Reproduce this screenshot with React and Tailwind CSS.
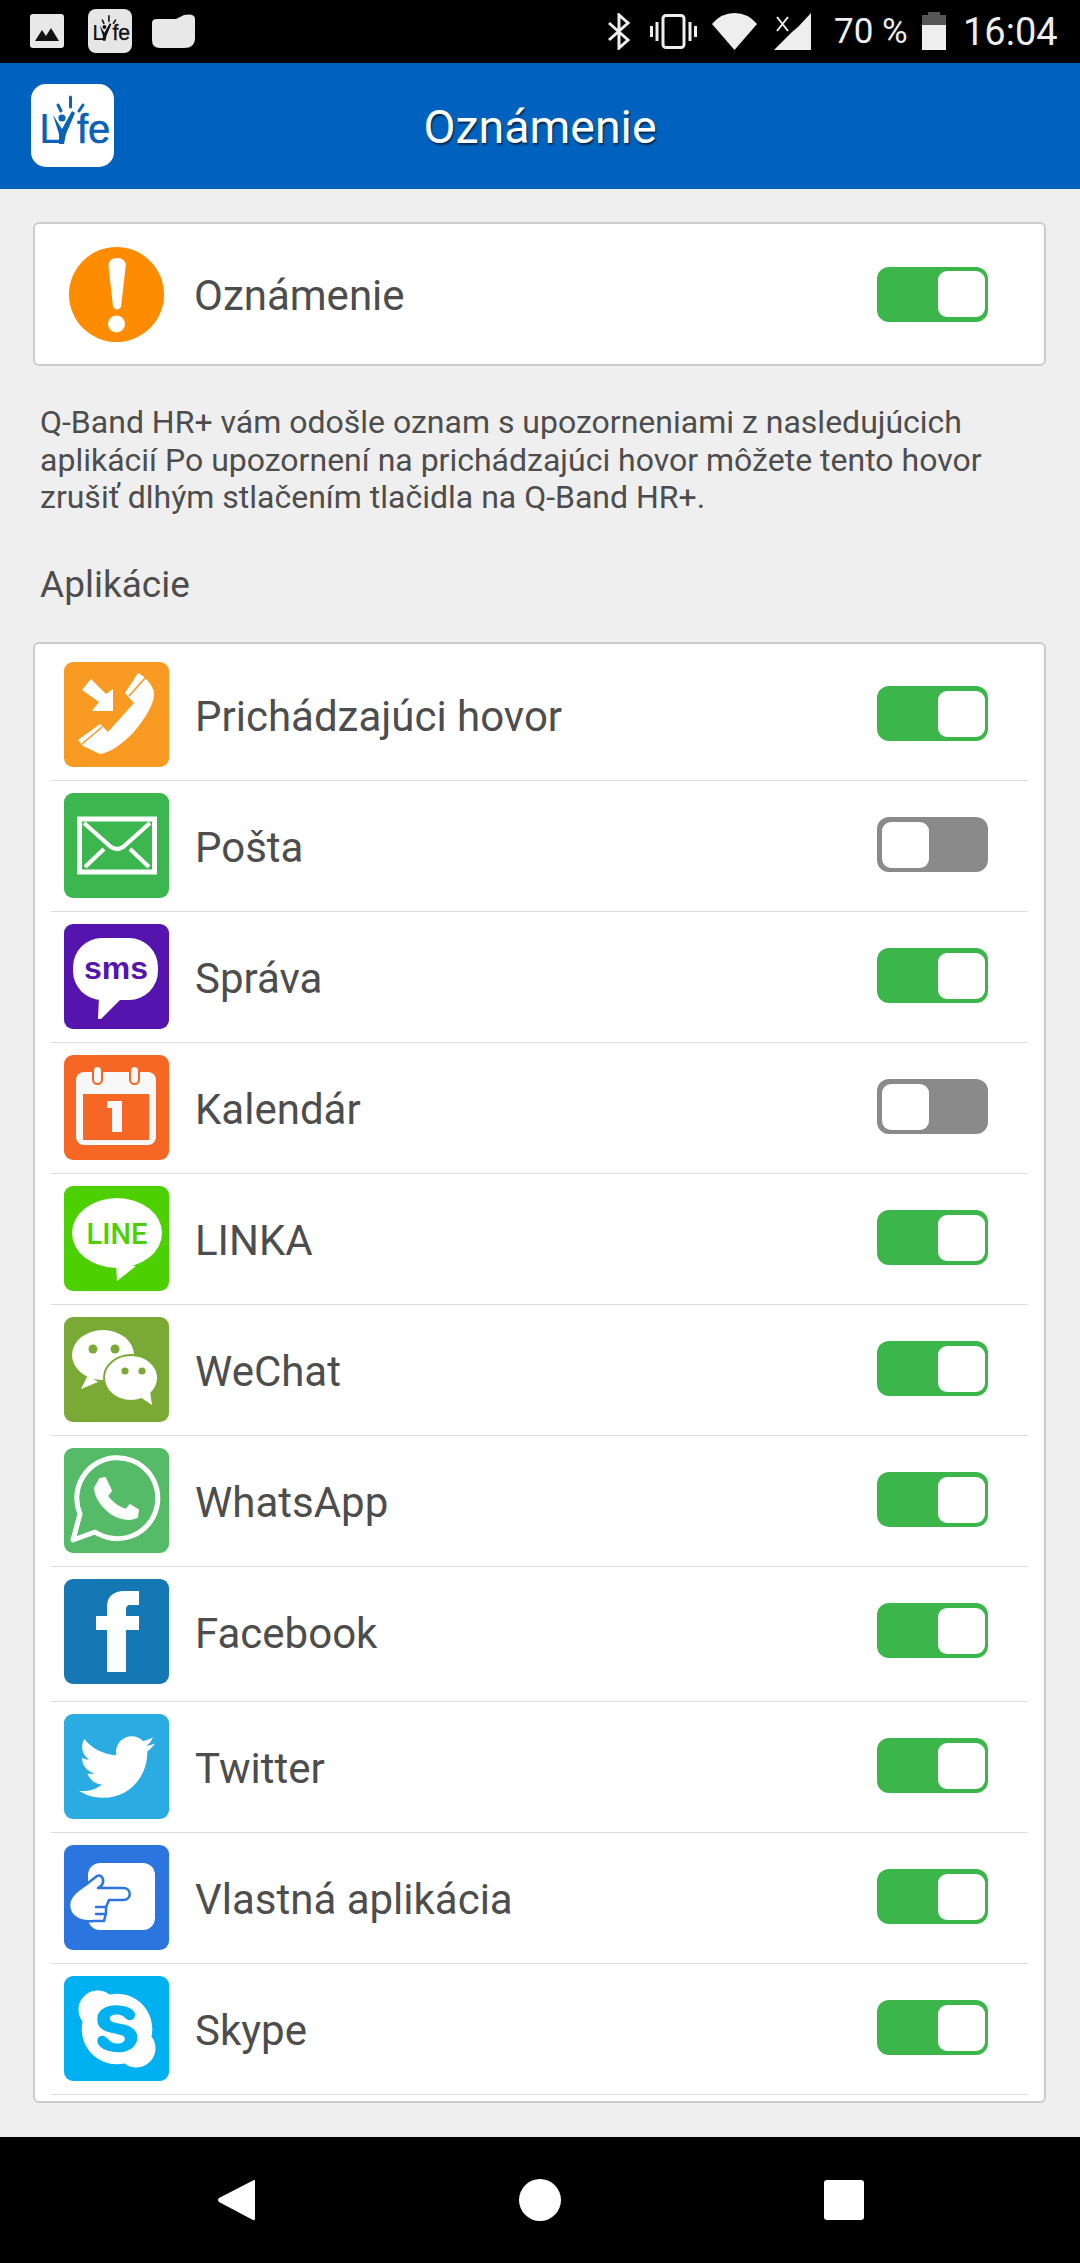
import { FaSkype, FaTwitter } from "react-icons/fa";

function LifeLogo({ color, box }) {
  return (
    <svg viewBox="0 0 83 83" className="h-full w-full">
      <rect width="83" height="83" rx="15" fill={box} />
      <text x="8" y="59" fontFamily="Liberation Sans, sans-serif" fontSize="43" fill={color}>L</text>
      <text x="46" y="59" fontFamily="Liberation Sans, sans-serif" fontSize="40" fill={color} stroke={color} strokeWidth="0.6">fe</text>
      <circle cx="31" cy="34" r="3.6" fill={color} />
      <path d="M22 31 L31 45 L41 27 L44 29 L35 50 L33 60 H28 L28 50 Z" fill={color} />
      <path d="M39.5 13 V23 M27 21 L30 27 M52 21 L48 27" stroke={color} strokeWidth="3" strokeLinecap="round" />
    </svg>
  );
}

function StatusIcons() {
  return (
    <div className="flex h-[63px] items-start bg-black">
      <svg viewBox="0 0 34 34" className="ml-[30px] mt-[14px] h-[34px] w-[34px]">
        <rect width="34" height="34" rx="3" fill="#e8e8e8" />
        <path d="M5 27 L12 16 L16 22 L21 14 L29 27 Z" fill="#111" />
      </svg>
      <div className="ml-[24px] mt-[9px] h-[44px] w-[44px]">
        <LifeLogo color="#111" box="#e6e6e6" />
      </div>
      <svg viewBox="0 0 43 34" className="ml-[20px] mt-[14px] h-[34px] w-[43px]">
        <path d="M0 9 Q0 5 5 5 H24 L32 1 Q43 -1 43 5 V24 Q43 34 32 34 H8 Q0 34 0 26 Z" fill="#e8e8e8" />
      </svg>
      <svg viewBox="0 0 24 37" className="ml-[412px] mt-[13px] h-[37px] w-[24px]" fill="none" stroke="#eee" strokeWidth="3">
        <path d="M2 10 L21 27 L12 35 V2 L21 10 L2 27" />
      </svg>
      <svg viewBox="0 0 47 35" className="ml-[19px] mt-[14px] h-[35px] w-[47px]" fill="none" stroke="#eee" strokeWidth="3">
        <rect x="13" y="1.5" width="21" height="32" rx="3" />
        <path d="M7 8 V27 M40 8 V27 M1.5 12 V23 M45.5 12 V23" />
      </svg>
      <svg viewBox="0 0 47 37" className="ml-[14px] mt-[13px] h-[37px] w-[47px]">
        <path d="M23.5 37 L1 11 Q10 0 23.5 0 Q37 0 46 11 Z" fill="#eee" />
      </svg>
      <svg viewBox="0 0 37 37" className="ml-[16px] mt-[13px] h-[37px] w-[37px]">
        <path d="M37 0 V37 H0 L18 19 L24 14 Z" fill="#eee" />
        <path d="M3 4 L14 18 M14 4 L3 18" stroke="#eee" strokeWidth="2" />
      </svg>
      <span className="ml-[23px] mt-[12px] w-[76px] whitespace-nowrap text-[35px] leading-[40px] text-[#eeeeee]">70 %</span>
      <div className="ml-[12px] mt-[12px] flex h-[38px] w-[24px] flex-col items-center">
        <div className="h-[3px] w-[12px] bg-[#555555]" />
        <div className="h-[10px] w-[24px] bg-[#555555]" />
        <div className="h-[25px] w-[24px] bg-[#eeeeee]" />
      </div>
      <span className="ml-[17px] mt-[11px] whitespace-nowrap text-[38px] leading-[42px] text-[#eeeeee]">16:04</span>
    </div>
  );
}

function Header() {
  return (
    <header className="relative flex h-[126px] items-start bg-[#0062be]">
      <div className="ml-[31px] mt-[21px] h-[83px] w-[83px]">
        <LifeLogo color="#0a62b8" box="#ffffff" />
      </div>
      <h1 className="absolute left-0 right-0 top-[37px] text-center text-[46.5px] leading-[54px] text-white [text-shadow:1px_2px_2px_rgba(0,0,0,0.6)]">Oznámenie</h1>
    </header>
  );
}

function Toggle({ on }) {
  return (
    <div className={`flex h-[55px] w-[111px] items-center rounded-[12px] ${on ? "justify-end bg-[#3cb54a] pr-[3px]" : "justify-start bg-[#8a8a8a] pl-[5px]"}`}>
      <div className="h-[46px] w-[47px] rounded-[9px] bg-white" />
    </div>
  );
}

function IconBox({ bg, children }) {
  return (
    <div className={`flex h-[105px] w-[105px] shrink-0 items-center justify-center overflow-hidden rounded-[9px] ${bg}`}>
      {children}
    </div>
  );
}

function Drawing({ children }) {
  return <svg viewBox="0 0 105 105" className="h-[105px] w-[105px]">{children}</svg>;
}

const icons = {
  call: (
    <IconBox bg="bg-[#f99a22]">
      <Drawing>
        <path d="M74 11 L79 14 Q90 24 90 32 Q90 46 69 71 Q50 90 36 92 L19 84 L14 78 L36 62 L44 70 L70 41 L61 31 Z" fill="#fff" />
        <path d="M65 34 L82 15 M18 82 L38 65" stroke="#f99a22" strokeWidth="1.6" />
        <path d="M49 49 H28 L35 40 L18 28 L27 17 L42 32 L49 27 Z" fill="#fff" />
      </Drawing>
    </IconBox>
  ),
  mail: (
    <IconBox bg="bg-[#3cb64e]">
      <Drawing>
        <rect x="15.5" y="26" width="75" height="53" fill="none" stroke="#fff" strokeWidth="5" />
        <path d="M20 30 L47 54 Q53 58 59 54 L86 30 M21 74 L40 56 M85 74 L66 56" fill="none" stroke="#fff" strokeWidth="4.2" />
      </Drawing>
    </IconBox>
  ),
  sms: (
    <IconBox bg="bg-[#5514ae]">
      <Drawing>
        <rect x="9" y="14" width="85" height="62" rx="29" fill="#fff" />
        <path d="M35 72 L34 95 L37 95 L58 74 Z" fill="#fff" />
        <text x="52" y="55" textAnchor="middle" fontFamily="Liberation Sans, sans-serif" fontWeight="700" fontSize="32" fill="#5514ae">sms</text>
      </Drawing>
    </IconBox>
  ),
  calendar: (
    <IconBox bg="bg-[#f66725]">
      <Drawing>
        <rect x="12" y="17" width="80" height="73" rx="8" fill="#f8f8f8" />
        <rect x="19" y="39" width="66" height="46" fill="#f66725" />
        <rect x="29" y="11" width="9" height="18" rx="4.5" fill="#f8f8f8" stroke="#f66725" strokeWidth="2" />
        <rect x="66" y="11" width="9" height="18" rx="4.5" fill="#f8f8f8" stroke="#f66725" strokeWidth="2" />
        <path d="M43 46 H58 V77 H48 V53 H43 Z" fill="#f8f8f8" />
      </Drawing>
    </IconBox>
  ),
  line: (
    <IconBox bg="bg-[#4cd000]">
      <Drawing>
        <ellipse cx="53" cy="47" rx="45" ry="35" fill="#fff" />
        <path d="M52 78 L53 95 L72 80 Z" fill="#fff" />
        <text x="53" y="58" textAnchor="middle" fontFamily="Roboto, sans-serif" fontWeight="500" fontSize="29" fill="#4cd000">LINE</text>
      </Drawing>
    </IconBox>
  ),
  wechat: (
    <IconBox bg="bg-[#7aaa35]">
      <Drawing>
        <ellipse cx="39" cy="38" rx="31" ry="25" fill="#fff" />
        <path d="M24 58 L17 72 L34 65 Z" fill="#fff" />
        <circle cx="29" cy="32" r="4.5" fill="#7aaa35" />
        <circle cx="51" cy="32" r="4.5" fill="#7aaa35" />
        <ellipse cx="67" cy="61" rx="27" ry="23" fill="#fff" stroke="#7aaa35" strokeWidth="2" />
        <path d="M76 80 L88 88 L86 74 Z" fill="#fff" />
        <circle cx="61" cy="54" r="3.6" fill="#7aaa35" />
        <circle cx="78" cy="54" r="3.6" fill="#7aaa35" />
      </Drawing>
    </IconBox>
  ),
  whatsapp: (
    <IconBox bg="bg-[#56bb68]">
      <Drawing>
        <path d="M9 92 L16 66 A40.5 40.5 0 1 1 31 84 Z" fill="none" stroke="#fff" strokeWidth="5" strokeLinejoin="round" />
        <path d="M36 31 L41 30 L47 43 L43 48 Q50 58 62 62 L66 57 L74 62 L73 69 Q62 74 48 66 Q32 54 31 40 Z" fill="#fff" strokeLinejoin="round" stroke="#fff" strokeWidth="2" />
      </Drawing>
    </IconBox>
  ),
  facebook: (
    <IconBox bg="bg-[#1577b4]">
      <Drawing>
        <path d="M43 93 V51 H32 V37 H43 V28 C43 17 50 12 60 12 H75 V26 H66 C63 26 62 28 62 31 V37 H75 V51 H62 V93 Z" fill="#fff" />
      </Drawing>
    </IconBox>
  ),
  twitter: (
    <IconBox bg="bg-[#2aabe2]">
      <FaTwitter size={76} color="#ffffff" />
    </IconBox>
  ),
  custom: (
    <IconBox bg="bg-[#2c74de]">
      <Drawing>
        <rect x="24" y="18" width="67" height="67" rx="12" fill="#fff" />
        <path d="M5 60 C5 50 16 44 24 38 L33 31 C38 29 41 35 38 40 L34 43 H59 C68 43 68 55 59 55 H45 L42 62 V68 L40 76 L30 76 C14 78 5 70 5 60 Z" fill="#fff" stroke="#2c74de" strokeWidth="2.5" strokeLinejoin="round" />
        <path d="M32 62 H42 M32 69 H41" stroke="#2c74de" strokeWidth="2.5" strokeLinecap="round" />
      </Drawing>
    </IconBox>
  ),
  skype: (
    <IconBox bg="bg-[#00b1f2]">
      <FaSkype size={88} color="#ffffff" />
    </IconBox>
  ),
};

const apps = [
  { name: "Prichádzajúci hovor", icon: "call", on: true },
  { name: "Pošta", icon: "mail", on: false },
  { name: "Správa", icon: "sms", on: true },
  { name: "Kalendár", icon: "calendar", on: false },
  { name: "LINKA", icon: "line", on: true },
  { name: "WeChat", icon: "wechat", on: true },
  { name: "WhatsApp", icon: "whatsapp", on: true },
  { name: "Facebook", icon: "facebook", on: true, tall: true },
  { name: "Twitter", icon: "twitter", on: true },
  { name: "Vlastná aplikácia", icon: "custom", on: true },
  { name: "Skype", icon: "skype", on: true },
];

function AppRow({ app }) {
  return (
    <div className={`flex items-start border-b border-[#dddddd] pl-[13px] pr-[40px] pt-[12px] ${app.tall ? "h-[135px]" : "h-[131px]"}`}>
      {icons[app.icon]}
      <span className="ml-[26px] mt-[30px] flex-1 text-[42px] leading-[50px] text-[#4d4d4d]">{app.name}</span>
      <div className="mt-[24px]">
        <Toggle on={app.on} />
      </div>
    </div>
  );
}

export default function App() {
  return (
    <div className="flex h-[2263px] w-[1080px] flex-col bg-[#efefef] font-['Roboto',sans-serif]">
      <StatusIcons />
      <Header />
      <main className="flex-1 pl-[33px] pr-[34px] pt-[33px]">
        <section className="flex h-[144px] items-center rounded-[6px] border-2 border-[#cccccc] bg-white pl-[34px] pr-[56px]">
          <svg viewBox="0 0 95 95" className="h-[95px] w-[95px] shrink-0">
            <circle cx="47.5" cy="47.5" r="47.5" fill="#ff8c00" />
            <path d="M39.5 19 Q39.5 11 48 11 Q56.7 11 56.7 19 L52 60 Q48 65 44 60 Z" fill="#fff" />
            <circle cx="47.5" cy="77" r="8.5" fill="#fff" />
          </svg>
          <span className="ml-[30px] mt-[3px] flex-1 text-[42px] leading-[50px] text-[#4d4d4d]">Oznámenie</span>
          <Toggle on />
        </section>
        <p className="ml-[7px] mt-[38px] w-[1005px] text-[32px] leading-[37.5px] text-[#4d4d4d]">
          Q-Band HR+ vám odošle oznam s upozorneniami z nasledujúcich aplikácií Po upozornení na prichádzajúci hovor môžete tento hovor zrušiť dlhým stlačením tlačidla na Q-Band HR+.
        </p>
        <h2 className="ml-[7px] mt-[46px] text-[37px] leading-[44px] text-[#4d4d4d]">Aplikácie</h2>
        <section className="mt-[35.5px] h-[1461px] rounded-[6px] border-2 border-[#cccccc] bg-white px-[16px] pt-[6px]">
          {apps.map((app) => (
            <AppRow key={app.name} app={app} />
          ))}
        </section>
      </main>
      <nav className="flex h-[126px] shrink-0 items-center bg-black">
        <svg viewBox="0 0 37 42" className="ml-[218px] h-[42px] w-[37px]">
          <path d="M36 1 Q37 0 37 3 V39 Q37 42 35 41 L1 23 Q-1 21 1 19 Z" fill="#fff" />
        </svg>
        <div className="ml-[264px] h-[42px] w-[42px] rounded-full bg-white" />
        <div className="ml-[263px] h-[40px] w-[40px] rounded-[3px] bg-white" />
      </nav>
    </div>
  );
}
